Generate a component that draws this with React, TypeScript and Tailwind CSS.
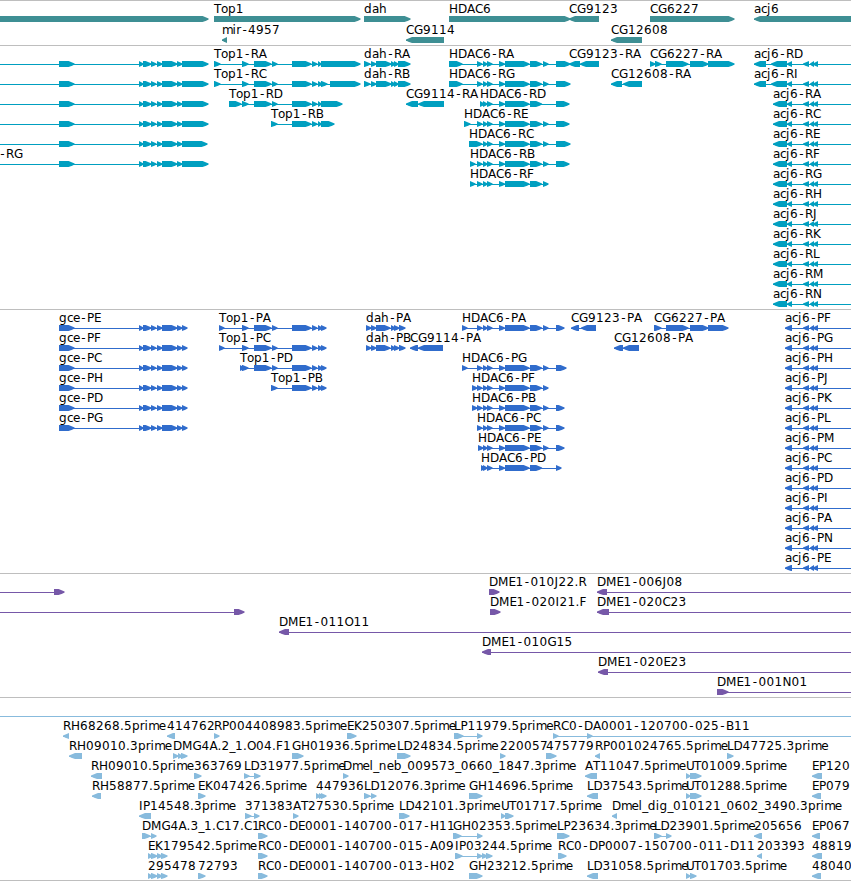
import React from "react";

type Exon = [number, number];

type Feature = {
  row: number;
  exons: Exon[];
  label?: string;
  labelX?: number;
  reverse?: boolean;
  from?: number;
  to?: number;
};

const WIDTH = 851;

// advance widths of the label characters, everything else is 8px
const ADVANCE: Record<string, number> = {
  a: 7, c: 6, e: 7, i: 3.7, j: 4, l: 3.7, m: 10.6, o: 7, p: 7.7, r: 4.8,
  D: 9, E: 7, F: 7, G: 9, H: 9, I: 4, J: 4, L: 6.5, M: 10.5, N: 9, O: 9, P: 7, T: 7,
  "-": 7, "_": 5.5, ".": 4,
};

const fwd = (row: number, label: string | undefined, exons: Exon[], rest: Partial<Feature> = {}): Feature => ({
  row,
  label,
  exons,
  ...rest,
});

const rev = (row: number, label: string | undefined, exons: Exon[], rest: Partial<Feature> = {}): Feature => ({
  row,
  label,
  exons,
  reverse: true,
  ...rest,
});

const genes: Feature[] = [
  fwd(0, undefined, [[-10, 208]]),
  fwd(0, "Top1", [[214, 360]]),
  fwd(0, "dah", [[364, 410]]),
  fwd(0, "HDAC6", [[449, 570]]),
  rev(0, "CG9123", [[569, 599]]),
  fwd(0, "CG6227", [[650, 734]]),
  rev(0, "acj6", [[754, 870]]),
  rev(1, "mir-4957", [[222, 227]]),
  rev(1, "CG9114", [[406, 444]]),
  rev(1, "CG12608", [[611, 642]]),
];

const gceHead: Exon[] = [[59, 74], [139, 143], [143, 151], [151, 156], [157, 162], [162, 177], [177, 182]];
const top1Mid: Exon[] = [[242, 248], [254, 271], [272, 277]];
const top1Late: Exon[] = [[292, 311], [312, 317]];
const dahR: Exon[] = [[364, 370], [371, 376], [376, 391], [391, 395], [394, 398], [398, 410]];
const dahP: Exon[] = [[366, 371], [371, 376], [376, 390], [391, 395], [394, 399], [399, 405]];
const hdacA: Exon[] = [[477, 482]];
const hdacB: Exon[] = [[483, 487], [487, 492], [499, 504.5], [505, 529], [530, 541.5]];
const hdacC: Exon[] = [[543, 548]];
const acj6Tail: Exon[] = [[787, 792], [803, 809], [810, 814], [813, 818]];

const transcripts: Feature[] = [
  ...[0, 1, 2, 3, 4, 5].map((row) =>
    fwd(row, row === 5 ? "-RG" : undefined, [...gceHead, [182, row === 4 ? 207 : 208]], { from: -10, labelX: -1 })
  ),
  fwd(0, "Top1-RA", [[214, 220], ...top1Mid, ...top1Late, [318, 321], [321, 360]]),
  fwd(1, "Top1-RC", [[214, 220], ...top1Mid, ...top1Late, [318, 322], [321, 327], [330, 360]]),
  fwd(2, "Top1-RD", [[229, 241], ...top1Mid, ...top1Late, [318, 321], [321, 342]]),
  fwd(3, "Top1-RB", [[271, 277], ...top1Late, [318, 321], [321, 334]]),
  fwd(0, "dah-RA", dahR),
  fwd(1, "dah-RB", dahR),
  rev(2, "CG9114-RA", [[406, 418], [418, 444]]),
  fwd(0, "HDAC6-RA", [[449, 462], ...hdacA, ...hdacB, ...hdacC, [556, 570]]),
  fwd(1, "HDAC6-RG", [[449, 462], ...hdacA, ...hdacB, ...hdacC, [556, 570]]),
  fwd(2, "HDAC6-RD", [[480, 484], ...hdacB, [556, 569]]),
  fwd(3, "HDAC6-RE", [[464, 470], ...hdacA, ...hdacB, ...hdacC, [556, 569]]),
  fwd(4, "HDAC6-RC", [[469, 482], ...hdacB, ...hdacC, [556, 570]]),
  fwd(5, "HDAC6-RB", [[470, 475], ...hdacA, ...hdacB, ...hdacC, [556, 569]]),
  fwd(6, "HDAC6-RF", [[470, 475], ...hdacA, ...hdacB, ...hdacC]),
  rev(0, "CG9123-RA", [[569, 580], [580, 599]]),
  rev(1, "CG12608-RA", [[611, 622], [623, 642]]),
  fwd(0, "CG6227-RA", [[650, 655], [655, 661], [666, 688], [690, 708], [708, 734]]),
  rev(0, "acj6-RD", [[754, 766], [771, 787], ...acj6Tail], { to: 860 }),
  rev(1, "acj6-RI", [[754, 766], [771, 787], ...acj6Tail], { to: 860 }),
  ...["RA", "RC", "RE", "RF", "RG", "RH", "RJ", "RK", "RL", "RM", "RN"].map((id, i) =>
    rev(i + 2, `acj6-${id}`, [[773, 787], ...acj6Tail], { to: 860 })
  ),
];

const proteins: Feature[] = [
  ...["PE", "PF", "PC", "PH", "PD", "PG"].map((id, i) => fwd(i, `gce-${id}`, [...gceHead, [182, 187]])),
  fwd(0, "Top1-PA", [[219, 224], ...top1Mid, ...top1Late, [318, 322], [321, 326]]),
  fwd(1, "Top1-PC", [[219, 224], ...top1Mid, ...top1Late, [318, 322], [321, 326]]),
  fwd(2, "Top1-PD", [[240, 244], ...top1Mid, ...top1Late, [318, 322], [321, 326]]),
  fwd(3, "Top1-PB", [[271, 277], ...top1Late, [318, 322], [321, 326]]),
  fwd(0, "dah-PA", dahP),
  fwd(1, "dah-PB", dahP),
  rev(1, "CG9114-PA", [[410, 418], [418, 443]]),
  fwd(0, "HDAC6-PA", [[462, 467], ...hdacA, ...hdacB, ...hdacC, [556, 564]]),
  fwd(2, "HDAC6-PG", [[462, 467], ...hdacA, ...hdacB, ...hdacC, [556, 566]]),
  fwd(3, "HDAC6-PF", [[472, 477], ...hdacA, ...hdacB, ...hdacC]),
  fwd(4, "HDAC6-PB", [[472, 477], ...hdacA, ...hdacB, ...hdacC, [556, 564]]),
  fwd(5, "HDAC6-PC", [[477, 482], ...hdacB, ...hdacC, [556, 564]]),
  fwd(6, "HDAC6-PE", [[478, 483], ...hdacB, ...hdacC, [556, 564]]),
  fwd(7, "HDAC6-PD", [[481, 485], ...hdacB, [556, 561]]),
  rev(0, "CG9123-PA", [[571, 579], [581, 596]]),
  rev(1, "CG12608-PA", [[614, 623], [623, 639]]),
  fwd(0, "CG6227-PA", [[654, 661], [666, 688], [690, 708], [708, 728]]),
  ...["PF", "PG", "PH", "PJ", "PK", "PL", "PM", "PC", "PD", "PI", "PA", "PN", "PE"].map((id, i) =>
    rev(i, `acj6-${id}`, [[785, 792], [803, 809], [810, 814], [813, 818]], { to: 860 })
  ),
];

const clones: Feature[] = [
  fwd(0, undefined, [[54, 64]], { from: -10 }),
  fwd(1, undefined, [[234, 244]], { from: -10 }),
  rev(2, "DME1-011O11", [[279, 289]], { to: 860 }),
  fwd(0, "DME1-010J22.R", [[489, 499]]),
  fwd(1, "DME1-020I21.F", [[490, 500]]),
  rev(0, "DME1-006J08", [[597, 607]], { to: 860 }),
  rev(1, "DME1-020C23", [[597, 609]], { to: 860 }),
  rev(3, "DME1-010G15", [[482, 491]], { to: 860 }),
  rev(4, "DME1-020E23", [[598, 608]], { to: 860 }),
  fwd(5, "DME1-001N01", [[717, 728]], { to: 860 }),
];

const ests: Feature[] = [
  fwd(-1, undefined, [], { from: 0, to: 860 }),

  rev(0, "RH68268.5prime", [[63, 69]]),
  rev(0, "414762", [[167, 175]]),
  fwd(0, "RP004408983.5prime", [[214, 219]]),
  fwd(0, "EK250307.5prime", [[347, 356]]),
  fwd(0, "LP11979.5prime", [[454, 463], [477, 482]]),
  fwd(0, "RC0-DA0001-120700-025-B11", [[553, 558], [587, 592]], { to: 860 }),

  rev(1, "RH09010.3prime", [[69, 82]]),
  fwd(1, "DMG4A.2_1.O04.F1", [[173, 178], [178, 182], [181, 187]]),
  fwd(1, "GH01936.5prime", [[292, 303]]),
  fwd(1, "LD24834.5prime", [[397, 410]]),
  fwd(1, "220057", [[500, 505]]),
  fwd(1, "475779", [[546, 556]]),
  rev(1, "RP001024765.5prime", [[595, 600]]),
  fwd(1, "LD47725.3prime", [[727, 733]]),

  rev(2, "RH09010.5prime", [[91, 102]]),
  fwd(2, "363769", [[194, 201]]),
  fwd(2, "LD31977.5prime", [[244, 249], [254, 260]]),
  fwd(2, "Dmel_neb_009573_0660_1847.3prime", [[343, 348]]),
  rev(2, "AT11047.5prime", [[585, 597]]),
  fwd(2, "UT01009.5prime", [[686, 690], [690, 701]]),
  rev(2, "EP120", [[812, 822]]),

  rev(3, "RH58877.5prime", [[92, 101]]),
  fwd(3, "EK047426.5prime", [[198, 205]]),
  fwd(3, "447936", [[316, 320], [319, 323], [321, 326]]),
  fwd(3, "LD12076.3prime", [[364, 370], [371, 376]]),
  fwd(3, "GH14696.5prime", [[469, 482]]),
  rev(3, "LD37543.5prime", [[587, 598]]),
  fwd(3, "UT01288.5prime", [[686, 690], [690, 701]]),
  rev(3, "EP079", [[812, 821]]),

  rev(4, "IP14548.3prime", [[139, 151]]),
  fwd(4, "371383", [[245, 251], [254, 259]]),
  fwd(4, "AT27530.5prime", [[293, 298]]),
  fwd(4, "LD42101.3prime", [[399, 409]]),
  fwd(4, "UT01717.5prime", [[501, 505], [505, 513]]),
  rev(4, "Dmel_dig_010121_0602_3490.3prime", [[612, 617]]),

  fwd(5, "DMG4A.3_1.C17.C1", [[142, 150], [151, 156]]),
  fwd(5, "RC0-DE0001-140700-017-H11", [[258, 267]]),
  fwd(5, "GH02353.5prime", [[453, 461], [477, 482]]),
  fwd(5, "LP23634.3prime", [[557, 569]]),
  fwd(5, "LD23901.5prime", [[654, 661], [666, 671]]),
  rev(5, "205656", [[754, 762]]),
  rev(5, "EP067", [[812, 820]]),

  fwd(6, "EK179542.5prime", [[148, 152], [151, 157], [157, 162], [161, 167]]),
  fwd(6, "RC0-DE0001-140700-015-A09", [[258, 267]]),
  fwd(6, "IP03244.5prime", [[455, 462], [477, 482], [482, 487], [486, 492]]),
  fwd(6, "RC0-DP0007-150700-011-D11", [[558, 566]]),
  rev(6, "203393", [[757, 762]]),
  rev(6, "48819", [[812, 822]]),

  fwd(7, "295478", [[148, 152], [151, 157], [157, 162], [161, 167]]),
  fwd(7, "72793", [[198, 205]]),
  fwd(7, "RC0-DE0001-140700-013-H02", [[258, 267]]),
  fwd(7, "GH23212.5prime", [[469, 482]]),
  rev(7, "LD31058.5prime", [[587, 598]]),
  fwd(7, "UT01703.5prime", [[686, 690], [690, 696]]),
  rev(7, "48040", [[812, 821]]),
];

const charPositions = (text: string, start: number) => {
  let x = start;
  return text
    .split("")
    .map((ch) => {
      // the hyphen glyph is narrower than its cell
      const at = ch === "-" ? x + 1.3 : x;
      x += ADVANCE[ch] ?? 8;
      return at;
    })
    .join(" ");
};

const arrowPoints = ([a, b]: Exon, y: number, reverse?: boolean) => {
  const tip = reverse ? a : b + 0.6;
  const tail = reverse ? b : a;
  const dir = reverse ? -1 : 1;
  const head = Math.min(6, Math.abs(tip - tail));
  const neck = tip - dir * head;
  const mid = tip - dir * head * 0.4;
  return [
    [tail, y],
    [neck, y],
    [mid, y + 1.4],
    [tip, y + 2.6],
    [tip, y + 3.6],
    [mid, y + 4.8],
    [neck, y + 6],
    [tail, y + 6],
  ].join(" ");
};

type TrackProps = {
  features: Feature[];
  height: number;
  baseline: number;
  step?: number;
  className: string;
};

const Track = ({ features, height, baseline, step = 20, className }: TrackProps) => {
  return (
    <section className="border-t border-[#bebebe]">
      <svg width={WIDTH} height={height} className={`block ${className}`}>
        {features.map((f, i) => {
          const textY = baseline + f.row * step;
          const y = textY + 3;
          const start = f.from ?? f.exons[0][0];
          const end = f.to ?? f.exons[f.exons.length - 1][1];
          return (
            <g key={i}>
              <rect x={start} y={y + 3} width={end - start} height={1} />
              {f.exons.map((exon, j) => (
                <polygon key={j} points={arrowPoints(exon, y, f.reverse)} />
              ))}
              {f.label && (
                <text x={charPositions(f.label, f.labelX ?? start)} y={textY} className="fill-black">
                  {f.label}
                </text>
              )}
            </g>
          );
        })}
      </svg>
    </section>
  );
};

const App = () => {
  return (
    <main className="w-[851px] h-[881px] overflow-hidden bg-white border-b border-[#bebebe] font-['DejaVu_Sans',sans-serif] text-[12px]">
      <Track features={genes} height={44} baseline={12} step={21} className="fill-[#3e8f94]" />
      <Track features={transcripts} height={263} baseline={12} className="fill-[#009fc0]" />
      <Track features={proteins} height={263} baseline={12} className="fill-[#306ccc]" />
      <Track features={clones} height={123} baseline={12} className="fill-[#7658a8]" />
      <Track features={ests} height={182} baseline={32} className="fill-[#88bbdd]" />
    </main>
  );
};

export default App;
